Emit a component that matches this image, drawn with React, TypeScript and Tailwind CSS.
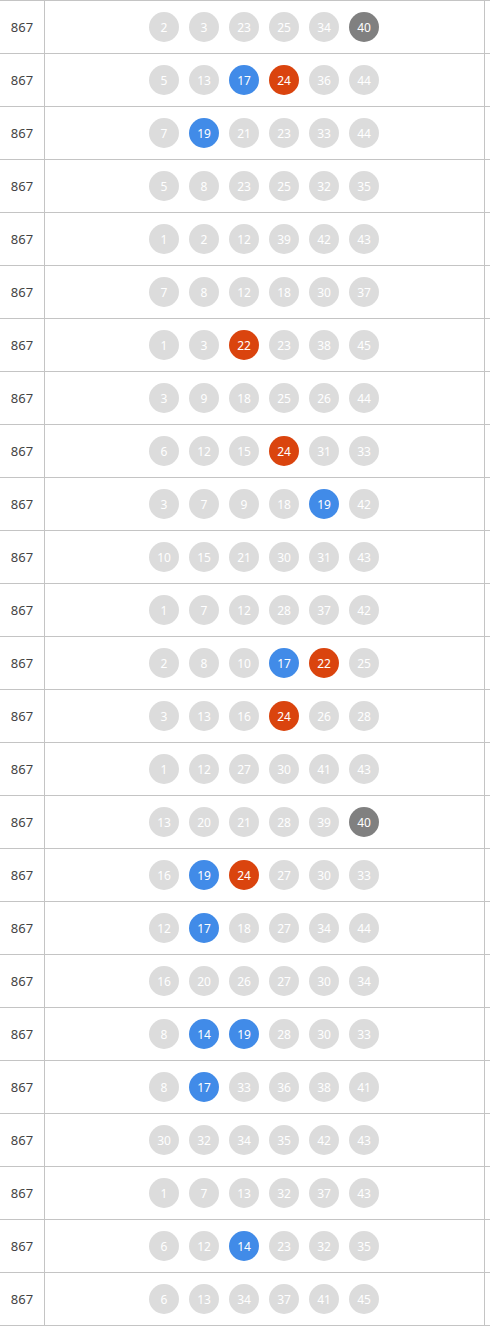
import React from 'react'

type Ball = { n: number; c?: 'b' | 'o' | 'd' }

const rows: Ball[][] = [
  [{ n: 2 }, { n: 3 }, { n: 23 }, { n: 25 }, { n: 34 }, { n: 40, c: 'd' }],
  [{ n: 5 }, { n: 13 }, { n: 17, c: 'b' }, { n: 24, c: 'o' }, { n: 36 }, { n: 44 }],
  [{ n: 7 }, { n: 19, c: 'b' }, { n: 21 }, { n: 23 }, { n: 33 }, { n: 44 }],
  [{ n: 5 }, { n: 8 }, { n: 23 }, { n: 25 }, { n: 32 }, { n: 35 }],
  [{ n: 1 }, { n: 2 }, { n: 12 }, { n: 39 }, { n: 42 }, { n: 43 }],
  [{ n: 7 }, { n: 8 }, { n: 12 }, { n: 18 }, { n: 30 }, { n: 37 }],
  [{ n: 1 }, { n: 3 }, { n: 22, c: 'o' }, { n: 23 }, { n: 38 }, { n: 45 }],
  [{ n: 3 }, { n: 9 }, { n: 18 }, { n: 25 }, { n: 26 }, { n: 44 }],
  [{ n: 6 }, { n: 12 }, { n: 15 }, { n: 24, c: 'o' }, { n: 31 }, { n: 33 }],
  [{ n: 3 }, { n: 7 }, { n: 9 }, { n: 18 }, { n: 19, c: 'b' }, { n: 42 }],
  [{ n: 10 }, { n: 15 }, { n: 21 }, { n: 30 }, { n: 31 }, { n: 43 }],
  [{ n: 1 }, { n: 7 }, { n: 12 }, { n: 28 }, { n: 37 }, { n: 42 }],
  [{ n: 2 }, { n: 8 }, { n: 10 }, { n: 17, c: 'b' }, { n: 22, c: 'o' }, { n: 25 }],
  [{ n: 3 }, { n: 13 }, { n: 16 }, { n: 24, c: 'o' }, { n: 26 }, { n: 28 }],
  [{ n: 1 }, { n: 12 }, { n: 27 }, { n: 30 }, { n: 41 }, { n: 43 }],
  [{ n: 13 }, { n: 20 }, { n: 21 }, { n: 28 }, { n: 39 }, { n: 40, c: 'd' }],
  [{ n: 16 }, { n: 19, c: 'b' }, { n: 24, c: 'o' }, { n: 27 }, { n: 30 }, { n: 33 }],
  [{ n: 12 }, { n: 17, c: 'b' }, { n: 18 }, { n: 27 }, { n: 34 }, { n: 44 }],
  [{ n: 16 }, { n: 20 }, { n: 26 }, { n: 27 }, { n: 30 }, { n: 34 }],
  [{ n: 8 }, { n: 14, c: 'b' }, { n: 19, c: 'b' }, { n: 28 }, { n: 30 }, { n: 33 }],
  [{ n: 8 }, { n: 17, c: 'b' }, { n: 33 }, { n: 36 }, { n: 38 }, { n: 41 }],
  [{ n: 30 }, { n: 32 }, { n: 34 }, { n: 35 }, { n: 42 }, { n: 43 }],
  [{ n: 1 }, { n: 7 }, { n: 13 }, { n: 32 }, { n: 37 }, { n: 43 }],
  [{ n: 6 }, { n: 12 }, { n: 14, c: 'b' }, { n: 23 }, { n: 32 }, { n: 35 }],
  [{ n: 6 }, { n: 13 }, { n: 34 }, { n: 37 }, { n: 41 }, { n: 45 }],
]

const ballColor = {
  b: 'bg-[#418be8]',
  o: 'bg-[#da440e]',
  d: 'bg-[#808080]',
  g: 'bg-[#dcdcdc]',
}

const App: React.FC = () => {
  return (
    <div className="w-[490px] overflow-hidden bg-white font-['Noto_Sans',sans-serif]">
      <div className="w-[560px] border-b border-[#c4c4c4]">
        {rows.map((balls, i) => (
          <div key={i} className="flex h-[53px] border-t border-[#c4c4c4]">
            <div className="flex w-[44px] shrink-0 items-center justify-center pt-[1px] text-[13px] text-[#444]">
              867
            </div>
            <div className="flex w-[440px] shrink-0 items-center justify-center gap-[10px] border-l border-[#c4c4c4] pr-[1px]">
              {balls.map((b, j) => (
                <span
                  key={j}
                  className={`flex h-[30px] w-[30px] items-center justify-center rounded-full pt-[1px] text-[12px] text-white ${ballColor[b.c ?? 'g']}`}
                >
                  {b.n}
                </span>
              ))}
            </div>
            <div className="flex-1 border-l border-[#c4c4c4]" />
          </div>
        ))}
      </div>
    </div>
  )
}

export default App
